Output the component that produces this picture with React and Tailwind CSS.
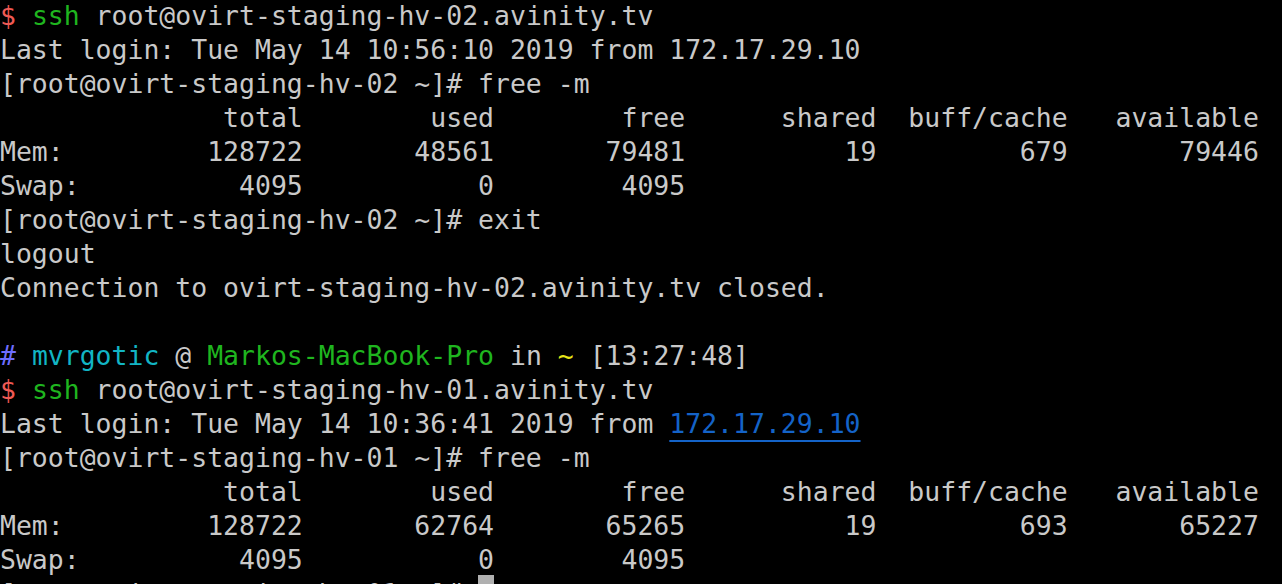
const Red = ({ children }) => <span className="text-[#ef5a55]">{children}</span>;
const Green = ({ children }) => <span className="text-[#1fb51f]">{children}</span>;

const Line = ({ children }) => (
  <div className="h-[34px] leading-[34px] whitespace-pre">{children}</div>
);

const Prompt = ({ host }) => (
  <>
    <Red>$</Red> <Green>ssh</Green> root@ovirt-staging-hv-{host}.avinity.tv
  </>
);

export default function App() {
  return (
    <div
      className="w-[1282px] h-[584px] overflow-hidden bg-black text-[#c9c9c9] text-[26.47px]"
      style={{ fontFamily: '"DejaVu Sans Mono", monospace' }}
    >
      <div className="-mt-[1px]">
        <Line>
          <Prompt host="02" />
        </Line>
        <Line>Last login: Tue May 14 10:56:10 2019 from 172.17.29.10</Line>
        <Line>[root@ovirt-staging-hv-02 ~]# free -m</Line>
        <Line>{"              total        used        free      shared  buff/cache   available"}</Line>
        <Line>{"Mem:         128722       48561       79481          19         679       79446"}</Line>
        <Line>{"Swap:          4095           0        4095"}</Line>
        <Line>[root@ovirt-staging-hv-02 ~]# exit</Line>
        <Line>logout</Line>
        <Line>Connection to ovirt-staging-hv-02.avinity.tv closed.</Line>
        <Line> </Line>
        <Line>
          <span className="text-[#6d6dff]">#</span>{" "}
          <span className="text-[#12b5c4]">mvrgotic</span> @{" "}
          <Green>Markos-MacBook-Pro</Green> in{" "}
          <span className="text-[#e6e619]">~</span> [13:27:48]
        </Line>
        <Line>
          <Prompt host="01" />
        </Line>
        <Line>
          Last login: Tue May 14 10:36:41 2019 from{" "}
          <span className="text-[#1463c8] underline decoration-[#1463c8] underline-offset-[7px] decoration-2">
            172.17.29.10
          </span>
        </Line>
        <Line>[root@ovirt-staging-hv-01 ~]# free -m</Line>
        <Line>{"              total        used        free      shared  buff/cache   available"}</Line>
        <Line>{"Mem:         128722       62764       65265          19         693       65227"}</Line>
        <Line>{"Swap:          4095           0        4095"}</Line>
        <Line>
          [root@ovirt-staging-hv-01 ~]#{" "}
          <span className="inline-block w-[16px] h-[34px] -mt-[2px] align-top bg-[#b0b0b0]" />
        </Line>
      </div>
    </div>
  );
}
